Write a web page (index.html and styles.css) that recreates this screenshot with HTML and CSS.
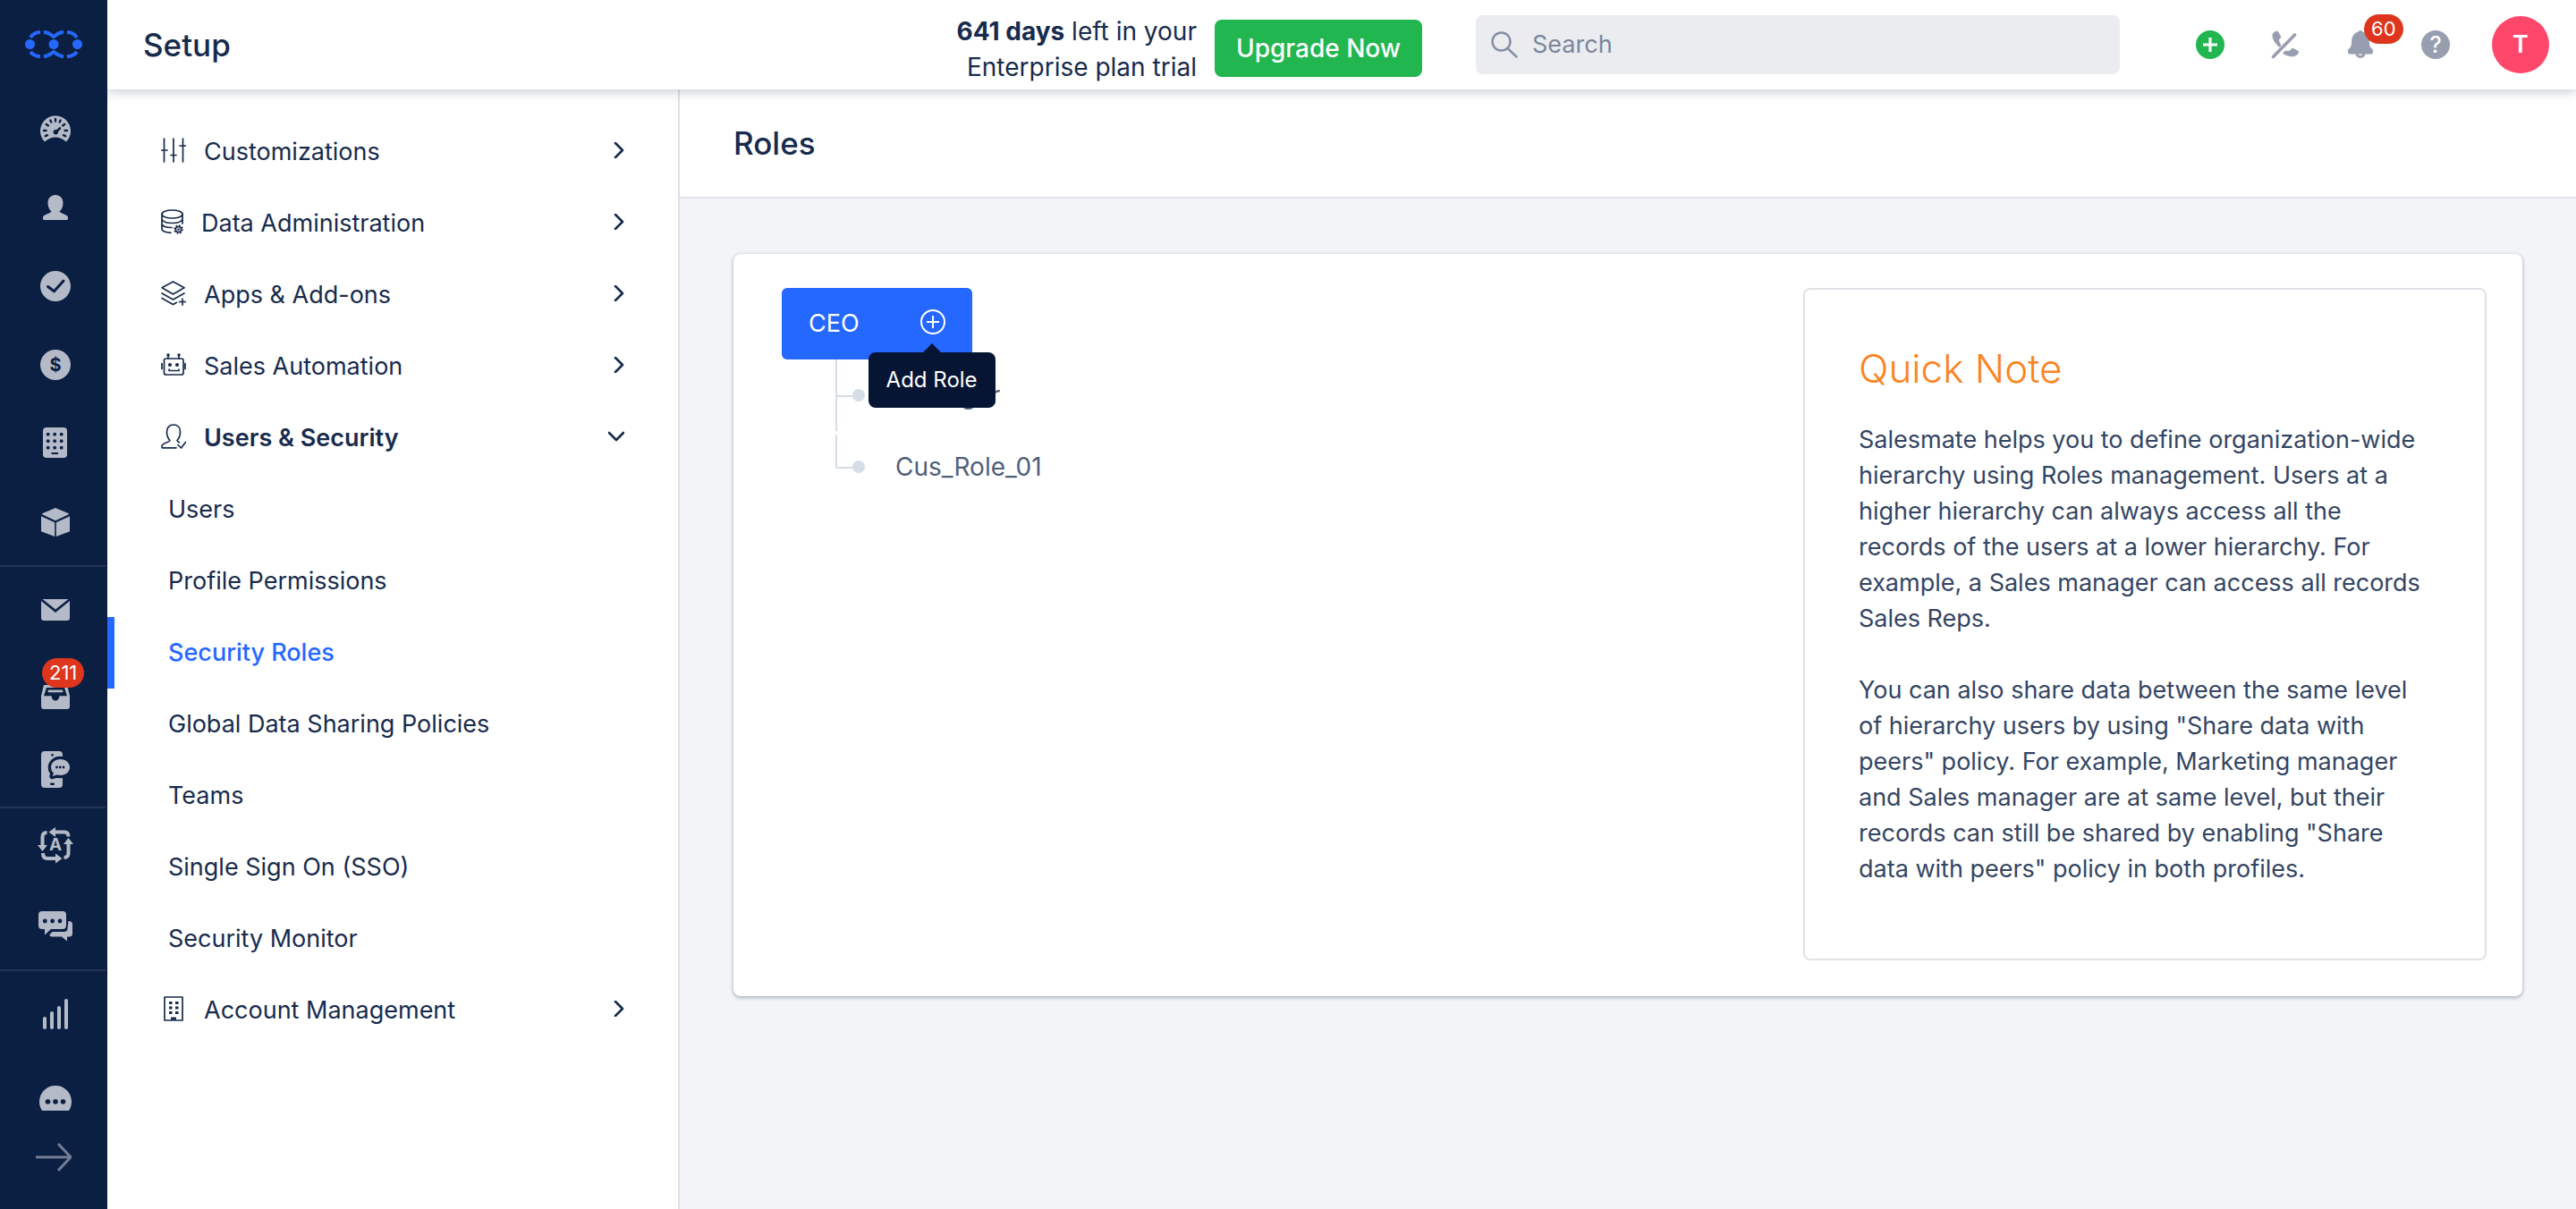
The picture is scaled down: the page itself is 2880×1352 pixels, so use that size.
FILE: index.html
```html
<!DOCTYPE html>
<html lang="en">
<head>
<meta charset="utf-8">
<title>Setup - Roles</title>
<meta name="viewport" content="width=device-width, initial-scale=1">
<link rel="stylesheet" href="styles.css">
</head>
<body>
<div class="app">
  <nav class="rail" aria-label="Main">
    <a class="rail-logo" href="#" aria-label="Home">
      <svg width="64" height="32" viewBox="0 0 64 32" aria-hidden="true">
        <g fill="none" stroke="#2568ff" stroke-width="4">
          <path d="M6 8Q10 2 17 2"/><path d="M21 2C26 2 28 4 32 7C36 4 38 2 43 2"/><path d="M47 2Q54 2 58 8"/>
          <path d="M6 24Q10 29 17 29"/><path d="M21 29C26 29 28 27 32 24C36 27 38 29 43 29"/><path d="M47 29Q54 29 58 24"/>
        </g>
        <g fill="#2568ff"><circle cx="5.500" cy="15.500" r="5.500"/><circle cx="32" cy="15.500" r="5.500"/><circle cx="58.500" cy="15.500" r="5.500"/></g>
      </svg>
    </a>
    <div class="rail-group">
      <a class="rail-link" href="#" aria-label="Dashboard"><svg class="rail-icon" viewBox="0 0 48 48">
        <path d="M12 38.500A17 17 0 1 1 36 38.500Q24 28.500 12 38.500Z"/>
        <g class="cut" stroke-width="2.400"><path d="M24 13v2.500M18.300 14.500l1 2M29.700 14.500l-1 2M13.700 19l2.200 1.400M34.300 19l-2.200 1.400M11 26h2.500M34.500 26h2.500M12.800 32.200l2.200-1M35.200 32.200l-2.200-1"/><path d="M24.500 27.500L29 23.500" stroke-width="2.600"/></g>
        <circle cx="24.300" cy="27.800" r="2.700" fill="#0b1f42"/></svg></a>
      <a class="rail-link" href="#" aria-label="Contacts"><svg class="rail-icon" viewBox="0 0 48 48"><path d="M24 10c5 0 8.500 3.500 8.500 9 0 4.500-2 8-4 9.500 1 2 9.500 3.500 9.500 6.500v1.500q0 1.500-1.500 1.500h-25q-1.500 0-1.500-1.500v-1.500c0-3 8.500-4.500 9.500-6.500-2-1.500-4-5-4-9.500 0-5.500 3.500-9 8.500-9z"/></svg></a>
      <a class="rail-link" href="#" aria-label="Activities"><svg class="rail-icon" viewBox="0 0 48 48"><circle cx="24" cy="24" r="17"/><path class="cut" stroke-width="3" d="M15.500 24.500l7 5.200L33 18"/></svg></a>
      <a class="rail-link" href="#" aria-label="Deals"><svg class="rail-icon" viewBox="0 0 48 48"><circle cx="24" cy="24" r="17"/><text class="cut-text" x="24" y="31" font-size="20">$</text></svg></a>
      <a class="rail-link" href="#" aria-label="Companies"><svg class="rail-icon" viewBox="0 0 48 48"><rect x="10" y="6" width="27" height="34" rx="4"/><g fill="#0b1f42"><circle cx="15.700" cy="13.700" r="1.900"/><circle cx="23.200" cy="13.700" r="1.900"/><circle cx="30.700" cy="13.700" r="1.900"/><circle cx="15.700" cy="21.200" r="1.900"/><circle cx="23.200" cy="21.200" r="1.900"/><circle cx="30.700" cy="21.200" r="1.900"/><circle cx="15.700" cy="28.700" r="1.900"/><circle cx="23.200" cy="28.700" r="1.900"/><circle cx="30.700" cy="28.700" r="1.900"/><rect x="19.500" y="34" width="7.500" height="2"/></g></svg></a>
      <a class="rail-link" href="#" aria-label="Products"><svg class="rail-icon" viewBox="0 0 48 48"><path d="M24 8l14.800 6.200v1L24 22.300 9.200 15.200v-1zM8 17.200l15.200 7V40L8 34.200zM40 17.200l-15.200 7V40L40 34.200z"/></svg></a>
    </div>
    <div class="rail-group">
      <a class="rail-link" href="#" aria-label="Email"><svg class="rail-icon" viewBox="0 0 48 48"><path d="M10 12h28.500L24 23.500 9.500 12zM8 14l16 13 16-13v19q0 3-3 3H11q-3 0-3-3z"/></svg></a>
      <a class="rail-link" href="#" aria-label="Shared inbox"><svg class="rail-icon" viewBox="0 0 48 48"><path fill-rule="evenodd" d="M11 20h26l3 12v12q0 3-3 3H11q-3 0-3-3V32zM14 23l-3 9.200h8.500c.5 7 8.500 7 9 0H37L34 23z"/><rect x="15.500" y="25.500" width="17" height="2.800" rx="1.400"/></svg><span class="count count-inbox">211</span></a>
      <a class="rail-link" href="#" aria-label="Text messages"><svg class="rail-icon" viewBox="0 0 48 48"><rect x="8" y="6" width="24" height="41" rx="4"/><circle cx="20.500" cy="10.300" r="1.400" fill="#0b1f42"/><rect x="18" y="41.500" width="5" height="2.500" rx="1" fill="#0b1f42"/><path stroke="#0b1f42" stroke-width="6.500" stroke-linejoin="round" d="M29.500 15c6 0 10.500 4 10.500 9s-4.500 9-10.500 9l-4-.5-5 1.500 1.500-3.500c-2-1.500-3-4-3-6.500 0-5 4.500-9 10.500-9z" paint-order="stroke"/><g fill="#0b1f42"><circle cx="25.500" cy="24" r="1.400"/><circle cx="29.200" cy="24" r="1.400"/><circle cx="33" cy="24" r="1.400"/></g></svg></a>
    </div>
    <div class="rail-group rail-group-tight">
      <a class="rail-link" href="#" aria-label="Automation"><svg class="rail-icon" viewBox="0 0 48 48">
        <g fill="none" stroke="#b4bac7" stroke-width="4"><path d="M14.500 7c-4 0-5 2-5 5v10M22 6.500h12c3 0 4.500 2 4.500 5M10 30c0 4 2 6 5 6h9M33.500 35c3.500 0 5-2 5-5V19"/></g>
        <path d="M16.500 6.500L24 1v11zM4 21h11l-5.500 7zM31.500 36l-7.500-5.500v11zM33 20h11l-5.500-7z"/>
        <text class="rail-letter" x="24" y="27" font-size="19">A</text></svg></a>
      <a class="rail-link" href="#" aria-label="Chat"><svg class="rail-icon" viewBox="0 0 48 48"><path fill-rule="evenodd" d="M9 7h23q4 0 4 4v12q0 4-4 4H19l-7 6.500V27H9q-4 0-4-4V11q0-4 4-4z"/><g fill="#0b1f42"><circle cx="12.300" cy="18" r="2.400"/><circle cx="20.600" cy="18" r="2.400"/><circle cx="29" cy="18" r="2.400"/></g><path d="M38.500 18q4.500 0 4.500 4v10q0 3.500-3.500 3.500H37v5l-6-5H20q-2.500 0-2.500-2.500l3-3h13q4 0 4-4z"/></svg></a>
    </div>
    <div class="rail-group">
      <a class="rail-link" href="#" aria-label="Reports"><svg class="rail-icon" viewBox="0 0 48 48"><rect x="10" y="27" width="4" height="14" rx="2"/><rect x="18" y="21" width="4" height="20" rx="2"/><rect x="26" y="15" width="4" height="26" rx="2"/><rect x="34" y="7" width="4" height="34" rx="2"/></svg></a>
      <a class="rail-link" href="#" aria-label="More"><svg class="rail-icon" viewBox="0 0 48 48"><path d="M9 44A18 18 0 1 1 39 44z"/><g fill="#0b1f42"><circle cx="15.500" cy="34" r="2.800"/><circle cx="24" cy="34" r="2.800"/><circle cx="32.500" cy="34" r="2.800"/></g></svg></a>
    </div>
    <button class="rail-expand" type="button" aria-label="Expand menu"><svg width="40" height="32" viewBox="0 0 40 32" fill="none" stroke="#737d93" stroke-width="3"><path d="M0 16h39M25 1l14 15-14 15"/></svg></button>
  </nav>

  <div class="shell">
    <header class="topbar">
      <h1 class="title">Setup</h1>
      <p class="trial"><strong>641 days</strong> left in your<br>Enterprise plan trial</p>
      <button class="upgrade" type="button">Upgrade Now</button>
      <label class="search">
        <svg width="30" height="30" viewBox="0 0 30 30" fill="none" stroke="#8590a6" stroke-width="2.500" stroke-linecap="round" aria-hidden="true"><circle cx="11.500" cy="11.500" r="10"/><path d="M18.500 19L28.500 28.500"/></svg>
        <input type="search" placeholder="Search" aria-label="Search">
      </label>
      <div class="tools">
        <button class="tool" type="button" aria-label="Quick add"><svg viewBox="0 0 32 32"><circle cx="16" cy="16" r="16" fill="#21b64f"/><path d="M16 8v16M8 16h16" stroke="#fff" stroke-width="3.200"/></svg></button>
        <button class="tool" type="button" aria-label="Calls off"><svg viewBox="0 0 32 32" fill="#979eb0"><path d="M3 2.500C5 .5 7 0 8 1.500l3 5c.5 1.500-.5 2.500-2 3.500 0 2 1 4.500 2.500 6.500l-2 2.500C5 15.500 1 9 1.500 5.500 1.700 4 2 3.500 3 2.500z"/><path d="M13 25.500l3-3c2 .8 4 .5 5.500-.3 1-2 2-2.500 3.500-2.200l5.500 3c1 1 .5 2.500-1 4-3.500 3.500-11 3-16.500-1.500z"/><path d="M2.500 29.500L26.500 5" stroke="#979eb0" stroke-width="3.600" stroke-linecap="round"/></svg></button>
        <button class="tool" type="button" aria-label="Notifications"><svg viewBox="0 0 32 32" fill="#979eb0"><path d="M16 0c1.200 0 2 .6 2.200 1.600C23 3 25.500 6.500 25.800 11.500c.2 5 .7 7.500 3.700 9.500.6 1 .5 2.500.5 3.500q0 2-2 2H4q-2 0-2-2c0-1-.1-2.500.5-3.500 3-2 3.500-4.500 3.700-9.500C6.500 6.500 9 3 13.800 1.600 14 .6 14.800 0 16 0z"/><path d="M10.500 26a5.500 5 0 0 0 11 0h-3c-.5 2.500-4.500 2.500-5 0z"/></svg><span class="count count-bell">60</span></button>
        <button class="tool" type="button" aria-label="Help"><svg viewBox="0 0 32 32"><circle cx="16" cy="16" r="16" fill="#979eb0"/><text class="help-mark" x="16" y="25" font-size="25">?</text></svg></button>
      </div>
      <button class="avatar" type="button" aria-label="Account">T</button>
    </header>

    <div class="body">
      <nav class="setup" aria-label="Setup">
        <a class="section" href="#"><svg width="28" height="28" viewBox="0 0 28 28"><path d="M3.500 1v26M14 1v26M24.500 1v26M0 14h7M11 19.500h6M21 9h7"/></svg><span>Customizations</span><svg class="chevron" width="12" height="18" viewBox="0 0 12 18"><path d="M2 1l8 8-8 8"/></svg></a>
        <a class="section" href="#"><svg width="25" height="28" viewBox="0 0 25 28"><ellipse cx="12.500" cy="5.500" rx="11.500" ry="4.500"/><path d="M1 5.500V22c0 2.500 4 4 10 4.300M24 5.500V16M1 11c1 3.500 6 4.500 11.500 4.500S23 14 24 11M1 16.500c1 3 5 4 11 4"/><circle cx="19.500" cy="22.500" r="3.200"/><circle cx="19.500" cy="22.500" r=".5"/><path stroke-linecap="butt" stroke-dasharray="1.600 1.930" d="M24 22.500a4.500 4.500 0 1 1-9 0 4.500 4.500 0 1 1 9 0"/></svg><span>Data Administration</span><svg class="chevron" width="12" height="18" viewBox="0 0 12 18"><path d="M2 1l8 8-8 8"/></svg></a>
        <a class="section" href="#"><svg width="28" height="28" viewBox="0 0 28 28"><path d="M13.500 1L26 7.800 13.500 15 1 7.800zM1 14l12.500 7L26 14M1 19.500l12.500 7 4-2.200M20.500 23.500h7M24 20v7"/></svg><span>Apps &amp; Add-ons</span><svg class="chevron" width="12" height="18" viewBox="0 0 12 18"><path d="M2 1l8 8-8 8"/></svg></a>
        <a class="section" href="#"><svg width="28" height="28" viewBox="0 0 28 28"><rect x="3.500" y="7" width="21.500" height="18" rx="2"/><path d="M8 7V3M20 7V3M1 12.500v6M27 12.500v6M9 19v1.500h11V19"/><g fill="#172b4d" stroke="none"><circle cx="8" cy="3" r="1.800"/><circle cx="20" cy="3" r="1.800"/><circle cx="10" cy="14" r="2.100"/><circle cx="18" cy="14" r="2.100"/></g></svg><span>Sales Automation</span><svg class="chevron" width="12" height="18" viewBox="0 0 12 18"><path d="M2 1l8 8-8 8"/></svg></a>
        <a class="section open" href="#"><svg width="28" height="28" viewBox="0 0 28 28"><path d="M17 26.800H2q-1 0-1-1v-1c0-3 8-4 9-6.300C8 16.500 6.500 13 6.500 9c0-5 3-8 7.500-8s7.500 3 7.500 8c0 4-1.500 7.500-3.500 9.500 0 1 1 1.500 2.500 2.200M19 23.500l3.500 3.500 5-6.500"/></svg><span>Users &amp; Security</span><svg class="chevron" width="18" height="12" viewBox="0 0 18 12"><path d="M1 2l8 8 8-8"/></svg></a>
        <a class="page-link" href="#">Users</a>
        <a class="page-link" href="#">Profile Permissions</a>
        <a class="page-link current" href="#" aria-current="page">Security Roles</a>
        <a class="page-link" href="#">Global Data Sharing Policies</a>
        <a class="page-link" href="#">Teams</a>
        <a class="page-link" href="#">Single Sign On (SSO)</a>
        <a class="page-link" href="#">Security Monitor</a>
        <a class="section" href="#"><svg width="28" height="28" viewBox="0 0 28 28"><path d="M4 1h20v26H4z"/><path stroke-width="3" stroke-linecap="butt" d="M9 7.500h3.500M16 7.500h3.500M9 13h3.500M16 13h3.500M9 18.500h3.500M16 18.500h3.500M11 25h6"/></svg><span>Account Management</span><svg class="chevron" width="12" height="18" viewBox="0 0 12 18"><path d="M2 1l8 8-8 8"/></svg></a>
      </nav>

      <main class="content">
        <div class="page-head"><h2 class="title">Roles</h2></div>
        <section class="card">
          <div class="tree">
            <div class="role-root">
              <span>CEO</span>
              <button class="add-role" type="button" aria-label="Add role to CEO" aria-describedby="add-tip"><svg width="28" height="28" viewBox="0 0 28 28" fill="none" stroke="#fff" stroke-width="2"><circle cx="14" cy="14" r="13"/><path d="M14 7v14M7 14h14"/></svg></button>
              <span class="tooltip" id="add-tip" role="tooltip">Add Role</span>
            </div>
            <ul class="roles">
              <li><a href="#">Manager</a></li>
              <li><a href="#">Cus_Role_01</a></li>
            </ul>
          </div>
          <aside class="note">
            <h3>Quick Note</h3>
            <p>Salesmate helps you to define organization-wide hierarchy using Roles management. Users at a higher hierarchy can always access all the records of the users at a lower hierarchy. For example, a Sales manager can access all records Sales Reps.</p>
            <p>You can also share data between the same level of hierarchy users by using "Share data with peers" policy. For example, Marketing manager and Sales manager are at same level, but their records can still be shared by enabling "Share data with peers" policy in both profiles.</p>
          </aside>
        </section>
      </main>
    </div>
  </div>
</div>
</body>
</html>
```
FILE: styles.css
```css
* { box-sizing: border-box; }

body {
  margin: 0;
  background: #f3f4f7;
  color: #172b4d;
  font-family: Inter, "Liberation Sans", sans-serif;
  font-size: 27px;
  line-height: 40px;
}

h1, h2, h3, p, ul { margin: 0; padding: 0; }
a { color: inherit; text-decoration: none; }
button { border: 0; padding: 0; font: inherit; cursor: pointer; background: none; }
svg { display: block; flex: none; }

.app { display: flex; min-height: 100vh; }

/* Icon rail */
.rail { flex: none; width: 120px; background: #0b1f42; }
.rail-logo { display: flex; align-items: center; justify-content: center; height: 100px; }
.rail-group { padding: 4px 0 0; }
.rail-group + .rail-group { border-top: 2px solid #233554; margin-right: 2px; }
.rail-logo + .rail-group { padding: 0 0 4px; }
.rail-group-tight { padding: 0 0 4px; }
.rail-link { position: relative; display: flex; align-items: center; height: 88px; padding-left: 38px; }
.rail-icon { width: 48px; height: 48px; fill: #b4bac7; overflow: visible; }
.cut { fill: none; stroke: #0b1f42; stroke-linecap: round; }
.cut-text { fill: #0b1f42; font-weight: 700; text-anchor: middle; }
.rail-letter { font-weight: 700; text-anchor: middle; }
.rail-expand { display: flex; align-items: center; justify-content: center; width: 120px; height: 56px; }

.count {
  position: absolute;
  padding: 0 8px;
  border-radius: 17px;
  background: #de361c;
  color: #fff;
  font-size: 22px;
  line-height: 33px;
}
.count-inbox { left: 47px; top: 10px; }
.count-bell { left: 20px; top: -18px; }

/* Top bar */
.shell { flex: 1; min-width: 0; display: flex; flex-direction: column; }
.topbar {
  position: relative;
  z-index: 1;
  display: flex;
  align-items: center;
  height: 100px;
  padding: 0 30px 0 40px;
  background: #fff;
  box-shadow: 0 2px 12px rgba(9, 30, 66, .25);
  clip-path: inset(0 0 -20px 0);
}
.title { font-size: 35px; font-weight: 500; }
.trial { margin-left: auto; padding-top: 10px; font-size: 28px; text-align: right; }
.trial strong { font-weight: 700; }
.upgrade {
  height: 64px;
  margin: 8px 60px 0 20px;
  padding: 0 24px;
  border-radius: 8px;
  background: #21b64f;
  color: #fff;
  font-size: 28px;
  font-weight: 500;
}
.search {
  display: flex;
  align-items: center;
  gap: 16px;
  flex: 0 1 720px;
  height: 66px;
  margin-right: 85px;
  padding: 0 17px;
  border-radius: 8px;
  background: #ebecf0;
}
.search input { flex: 1; min-width: 0; border: 0; padding: 0; outline: 0; background: none; font: inherit; color: inherit; }
.search input::placeholder { color: #7a869a; opacity: 1; }
.tools { display: flex; gap: 52px; margin-right: 47px; }
.tool { position: relative; width: 32px; height: 32px; }
.tool svg { width: 32px; height: 32px; }
.help-mark { fill: #fff; font-weight: 500; text-anchor: middle; }
.avatar { flex: none; width: 64px; height: 64px; border-radius: 50%; background: #ff476c; color: #fff; font-weight: 600; }

/* Setup menu */
.body { flex: 1; display: flex; }
.setup { flex: none; width: 640px; padding: 30px 0; border-right: 2px solid #dfe1e6; background: #fff; }
.section, .page-link { display: flex; align-items: center; height: 80px; }
.section { gap: 20px; padding: 0 60px; }
.section svg { margin-bottom: 4px; fill: none; stroke: #172b4d; stroke-width: 1.7; stroke-linecap: round; stroke-linejoin: round; }
.section .chevron { margin-left: auto; stroke-width: 2.6; }
.section.open { font-weight: 600; }
.page-link { padding-left: 68px; }
.page-link.current { padding-left: 60px; border-left: 8px solid #2568ff; color: #2568ff; font-weight: 500; }

/* Page */
.content { flex: 1; min-width: 0; }
.page-head { display: flex; align-items: center; height: 122px; padding: 0 60px; border-bottom: 2px solid #dfe1e6; background: #fff; }
.card {
  display: flex;
  justify-content: space-between;
  margin: 62px 60px;
  padding: 38px 40px 40px 54px;
  border-radius: 8px;
  background: #fff;
  box-shadow: 0 2px 4px rgba(9, 30, 66, .25), 0 0 4px rgba(9, 30, 66, .12);
}

/* Role tree */
.tree { flex: none; }
.role-root {
  position: relative;
  display: flex;
  align-items: center;
  gap: 68px;
  width: max-content;
  height: 80px;
  padding: 0 30px;
  border-radius: 6px;
  background: #2568ff;
  color: #fff;
}
.add-role { margin-bottom: 4px; }
.tooltip {
  position: absolute;
  right: -26px;
  top: 72px;
  z-index: 1;
  padding: 0 20px;
  border-radius: 8px;
  background: #061534;
  font-size: 24px;
  line-height: 62px;
  white-space: nowrap;
}
.tooltip::before {
  content: "";
  position: absolute;
  left: 50%;
  top: -10px;
  margin-left: -10px;
  border: 10px solid transparent;
  border-top: 0;
  border-bottom-color: #061534;
}
.roles { list-style: none; margin-left: 60px; color: #505f79; font-size: 28px; }
.roles li { position: relative; display: flex; align-items: center; height: 80px; border-left: 2px solid #d5dde6; padding-left: 65px; }
.roles li::before { content: ""; position: absolute; left: 0; top: 40px; width: 24px; height: 2px; background: #d5dde6; }
.roles li::after { content: ""; position: absolute; left: 17px; top: 33px; width: 14px; height: 14px; border-radius: 50%; background: #d5dde6; }
.roles li:last-child { border-left-color: transparent; background: linear-gradient(#d5dde6, #d5dde6) 0 4px / 2px 38px no-repeat border-box; }

/* Quick note */
.note { flex: 0 1 764px; padding: 60px 64px 80px 60px; border: 2px solid #dfe1e6; border-radius: 8px; color: #344563; }
.note h3 { margin-bottom: 32px; color: #fa8423; font-size: 44px; font-weight: 300; line-height: 56px; }
.note p + p { margin-top: 40px; }
```
